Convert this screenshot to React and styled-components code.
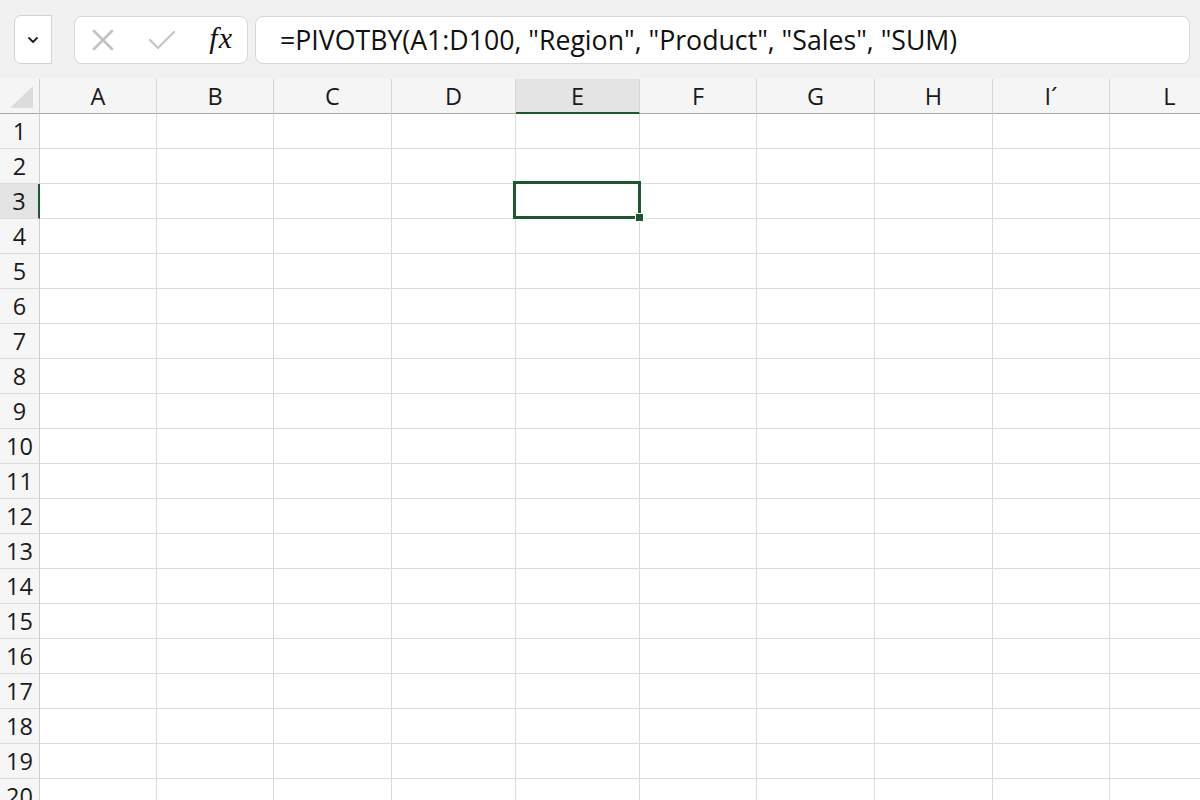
import React from 'react'
import styled, { createGlobalStyle } from 'styled-components'

const GREEN = '#1e5632';
const columns = [
   { name: 'A', width: 117 },
   { name: 'B', width: 117 },
   { name: 'C', width: 118 },
   { name: 'D', width: 124 },
   { name: 'E', width: 124, active: true },
   { name: 'F', width: 117 },
   { name: 'G', width: 118 },
   { name: 'H', width: 118 },
   { name: 'I\u00B4', width: 117 },
   { name: 'L', width: 120 },
];
const rows = Array.from({ length: 20 }, (_, i) => i + 1);
const template = `40px ${columns.map(c => c.width + 'px').join(' ')}`;

const App = () => {
   return (
      <Page>
         <GlobalStyle />
         <TopBar>
            <NameBox>
               <svg width="12" height="8" viewBox="0 0 12 8">
                  <path d="M2 2 L6 6 L10 2" fill="none" stroke="#222" strokeWidth="1.8" strokeLinecap="round" strokeLinejoin="round" />
               </svg>
            </NameBox>
            <IconBox>
               <svg width="24" height="24" viewBox="0 0 24 24">
                  <path d="M3 3 L21 21 M21 3 L3 21" stroke="#c2c2c2" strokeWidth="2.6" strokeLinecap="round" />
               </svg>
               <svg width="28" height="22" viewBox="0 0 28 22">
                  <path d="M2 11 L10 19 L26 3" fill="none" stroke="#c6c6c6" strokeWidth="2.4" strokeLinecap="round" strokeLinejoin="round" />
               </svg>
               <Fx>fx</Fx>
            </IconBox>
            <FormulaInput>=PIVOTBY(A1:D100, "Region", "Product", "Sales", "SUM)</FormulaInput>
         </TopBar>
         <Sheet>
            <Grid style={{ gridTemplateColumns: template }}>
               <Corner>
                  <svg width="28" height="26" viewBox="0 0 28 26">
                     <path d="M26 2 L26 24 L3 24 Z" fill="#dcdcdc" />
                  </svg>
               </Corner>
               {columns.map(c => (
                  <ColHead key={c.name} active={c.active}>{c.name}</ColHead>
               ))}
               {rows.map(r => (
                  <React.Fragment key={r}>
                     <RowHead active={r === 3}>{r}</RowHead>
                     {columns.map(c => <Cell key={c.name} />)}
                  </React.Fragment>
               ))}
            </Grid>
            <Selection>
               <Handle />
            </Selection>
         </Sheet>
      </Page>
   )
}

const GlobalStyle = createGlobalStyle`
   html, body {
      margin: 0;
      padding: 0;
      background: #ffffff;
      overflow: hidden;
   }
   body {
      font-family: "Open Sans", "Noto Sans", sans-serif;
   }
`;

const Page = styled.div`
   width: 1200px;
   height: 800px;
   overflow: hidden;
   background: #ffffff;
`;

const TopBar = styled.div`
   display: flex;
   align-items: center;
   height: 79px;
   padding: 0 10px 0 14px;
   box-sizing: border-box;
   background: #f1f1f1;
`;

const NameBox = styled.div`
   display: flex;
   align-items: center;
   justify-content: center;
   width: 38px;
   height: 49px;
   box-sizing: border-box;
   background: #ffffff;
   border: 1px solid #d2d2d2;
   border-radius: 7px 0 0 7px;
   margin-right: 22px;
`;

const IconBox = styled.div`
   display: flex;
   align-items: center;
   justify-content: space-between;
   width: 174px;
   height: 48px;
   box-sizing: border-box;
   padding: 0 14px 0 16px;
   background: #ffffff;
   border: 1px solid #d6d6d6;
   border-radius: 8px;
   margin-right: 7px;
`;

const Fx = styled.span`
   font-family: "Liberation Serif", "DejaVu Serif", serif;
   font-style: italic;
   font-size: 30px;
   color: #111;
   letter-spacing: 1px;
   line-height: 1;
   margin-top: -4px;
`;

const FormulaInput = styled.div`
   display: flex;
   align-items: center;
   flex: 1;
   height: 48px;
   box-sizing: border-box;
   padding-left: 24px;
   background: #ffffff;
   border: 1px solid #d6d6d6;
   border-radius: 8px;
   font-size: 26.7px;
   color: #111;
   white-space: nowrap;
`;

const Sheet = styled.div`
   position: relative;
`;

const Grid = styled.div`
   display: grid;
   grid-auto-rows: 35px;
   grid-template-rows: 35px;
`;

const Corner = styled.div`
   display: flex;
   align-items: flex-end;
   justify-content: flex-end;
   padding: 0 4px 3px 0;
   background: #f5f5f5;
   border-right: 1px solid #cfcfcf;
   border-bottom: 1px solid #a8a8a8;
`;

const ColHead = styled.div`
   display: flex;
   align-items: center;
   justify-content: center;
   font-size: 23.5px;
   color: #1a1a1a;
   background: ${props => props.active ? '#e4e4e4' : '#f5f5f5'};
   border-right: 1px solid #d6d6d6;
   border-bottom: ${props => props.active ? `2px solid ${GREEN}` : '1px solid #a8a8a8'};
`;

const RowHead = styled.div`
   display: flex;
   align-items: center;
   justify-content: center;
   font-size: 23.5px;
   color: #1a1a1a;
   background: ${props => props.active ? '#e4e4e4' : '#f6f6f6'};
   border-right: ${props => props.active ? `2px solid ${GREEN}` : '1px solid #cfcfcf'};
   border-bottom: 1px solid #dcdcdc;
`;

const Cell = styled.div`
   background: #ffffff;
   border-right: 1px solid #dcdcdc;
   border-bottom: 1px solid #dcdcdc;
`;

const Selection = styled.div`
   position: absolute;
   left: 513px;
   top: 102px;
   width: 128px;
   height: 38px;
   box-sizing: border-box;
   border: 3px solid ${GREEN};
`;

const Handle = styled.div`
   position: absolute;
   right: -6px;
   bottom: -6px;
   width: 7px;
   height: 7px;
   background: ${GREEN};
   border: 1px solid #ffffff;
`;

export default App
